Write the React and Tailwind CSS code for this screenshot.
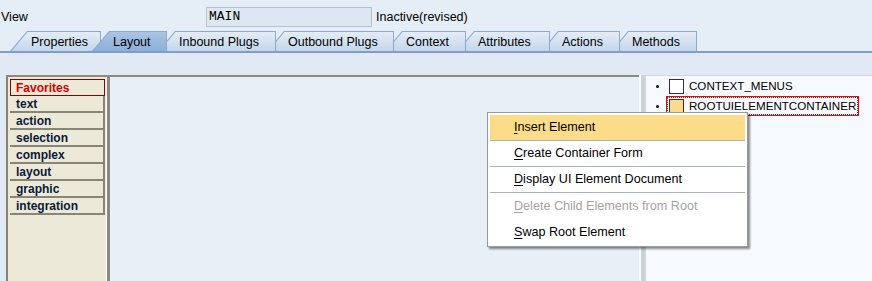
import React from 'react';

const tabs = [
  { label: 'Properties', w: 'w-[91px]', z: 'z-[9]' },
  { label: 'Layout', w: 'w-[75px]', z: 'z-[20]', active: true },
  { label: 'Inbound Plugs', w: 'w-[118px]', z: 'z-[7]' },
  { label: 'Outbound Plugs', w: 'w-[127px]', z: 'z-[6]' },
  { label: 'Context', w: 'w-[81px]', z: 'z-[5]' },
  { label: 'Attributes', w: 'w-[93px]', z: 'z-[4]' },
  { label: 'Actions', w: 'w-[79px]', z: 'z-[3]' },
  { label: 'Methods', w: 'w-[86px]', z: 'z-[2]' },
];

const palette = ['text', 'action', 'selection', 'complex', 'layout', 'graphic', 'integration'];

const menu = [
  { key: 'I', rest: 'nsert Element', active: true, sep: true, h: 'h-[25px]' },
  { key: 'C', rest: 'reate Container Form', sep: true, h: 'h-[25px]' },
  { key: 'D', rest: 'isplay UI Element Document', sep: true, h: 'h-[25px]' },
  { key: 'D', rest: 'elete Child Elements from Root', disabled: true, h: 'h-[26px]' },
  { key: 'S', rest: 'wap Root Element', h: 'h-[26px]' },
];

function Tab({ tab, first }) {
  return (
    <div className={`relative h-[20px] ${tab.w} ${tab.z} ${first ? '' : '-ml-[9px]'}`}>
      <div className="absolute inset-0 bg-[#8ea8c8] [clip-path:polygon(17px_0,100%_0,100%_100%,0_100%)]" />
      <div
        className={`absolute inset-x-px top-px bottom-0 [clip-path:polygon(16.5px_0,100%_0,100%_100%,0.5px_100%)] ${
          tab.active ? 'bg-gradient-to-b from-[#a9c4e4] to-[#8caed9]' : 'bg-gradient-to-b from-[#e4edf7] to-[#c4d6eb]'
        }`}
      />
      <span className="relative flex h-full items-center pl-[21px] pt-[3px] text-[12.5px]">{tab.label}</span>
    </div>
  );
}

function TreeBox({ selected }) {
  return (
    <span
      className={`h-[15px] w-[15px] border ${selected ? 'border-[#3a3020] bg-[#fcd98c]' : 'border-[#303030] bg-white'}`}
    />
  );
}

export default function App() {
  return (
    <div className="relative h-[281px] w-[872px] overflow-hidden bg-[#e5edf6] font-['Liberation_Sans',Arial,sans-serif] text-black">
      <div className="flex h-[31px] items-center pt-[3px] text-[12.5px]">
        <span className="ml-px w-[205px]">View</span>
        <div className="flex h-[20px] w-[166px] items-center border border-[#b5c3d1] bg-[#dde7f1] pl-[2px] font-['Liberation_Mono',monospace] text-[13px]">
          MAIN
        </div>
        <span className="ml-[4px]">Inactive(revised)</span>
      </div>

      <div className="flex h-[20px] items-end pl-[10px]">
        {tabs.map((t, i) => (
          <Tab key={t.label} tab={t} first={i === 0} />
        ))}
      </div>
      <div className="h-[2px] bg-[#7d9ec5]" />
      <div className="h-[22px] bg-[#e1eaf4]" />

      <div className="flex h-[206px] bg-[#e1eaf4]">
        <div className="w-[6px]" />
        <div className="flex w-[633px] border-t-2 border-[#8c8b82]">
          <div className="flex w-[101px] border-l-2 border-[#86847a] bg-[#ece9d8]">
            <div className="flex w-[98px] flex-col pl-[2px] pr-px pt-[2px] text-[12px] font-bold">
              <div className="flex h-[17px] items-center border border-[#8b0000] pl-[5px] text-[#d40000]">Favorites</div>
              {palette.map(p => (
                <div key={p} className="flex h-[17px] items-center border-b-2 border-r-2 border-[#878578] pl-[6px] text-[#0a1a3a]">
                  {p}
                </div>
              ))}
            </div>
            <div className="w-px bg-white" />
          </div>
          <div className="w-[3px] bg-[#8a897f]" />
          <div className="flex-1 bg-[#e8eff7]" />
        </div>
        <div className="w-[2px] bg-white" />
        <div className="w-[4px] bg-[#c7d2de]" />
        <div className="flex flex-1 flex-col border-l border-t border-[#d0d9e3] bg-[#f6f9fd] pl-[10px] text-[11.6px]">
          <div className="mt-[2px] flex h-[16px] items-center">
            <span className="h-[3px] w-[3px] rounded-full bg-[#111]" />
            <span className="ml-[10px] flex items-center">
              <TreeBox />
            </span>
            <span className="ml-[5px]">CONTEXT_MENUS</span>
          </div>
          <div className="mt-[2px] flex h-[20px] items-center">
            <span className="h-[3px] w-[3px] rounded-full bg-[#111]" />
            <div className="ml-[7px] flex h-[20px] w-[193px] border border-[#ff0000]">
              <div className="flex flex-1 items-center border border-dotted border-[#404040] pl-px">
                <TreeBox selected />
                <span className="ml-[5px]">ROOTUIELEMENTCONTAINER</span>
              </div>
            </div>
          </div>
        </div>
      </div>

      <div className="absolute left-[487px] top-[112px] flex w-[261px] flex-col border border-[#9a9a9a] bg-white pb-px pt-[2px] text-[12.6px] shadow-[2px_2px_2px_rgba(0,0,0,0.45)]">
        {menu.map((m, i) => (
          <React.Fragment key={i}>
            <div
              className={`mx-[2px] flex items-center pl-[24px] ${m.h} ${m.active ? 'bg-[#fcdc88]' : ''} ${
                m.disabled ? 'text-[#a4a4a4]' : 'text-black'
              }`}
            >
              <span className="underline underline-offset-2">{m.key}</span>
              {m.rest}
            </div>
            {m.sep && <div className="mx-[2px] h-px bg-[#a9b4bf]" />}
          </React.Fragment>
        ))}
      </div>
    </div>
  );
}
